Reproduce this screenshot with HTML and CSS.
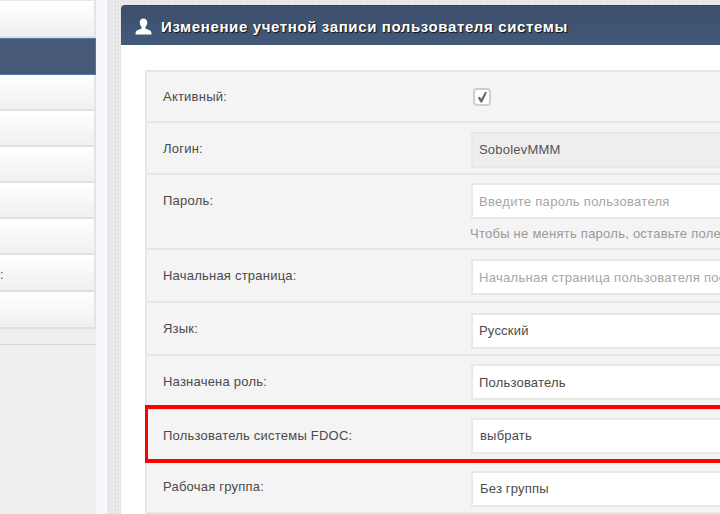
FILE: index.html
```html
<!DOCTYPE html>
<html lang="ru">
<head>
<meta charset="utf-8">
<title>Изменение учетной записи</title>
<link rel="stylesheet" href="styles.css">
</head>
<body>
<div class="page">
  <nav class="side">
    <ul class="menu">
      <li class="item"></li>
      <li class="item active"></li>
      <li class="item"></li>
      <li class="item"></li>
      <li class="item"></li>
      <li class="item"></li>
      <li class="item"></li>
      <li class="item">:</li>
      <li class="item"></li>
    </ul>
    <div class="side-gap"></div>
    <div class="side-rest"></div>
  </nav>
  <div class="rail"></div>
  <main class="main">
    <section class="panel">
      <header class="head">
        <svg class="user" viewBox="0 0 18 18" aria-hidden="true"><path d="M9 0.5c-2.6 0-4 1.9-4 4.3 0 1.9.9 3.7 1.9 4.6.3.3.3 1 .1 1.5-.3.7-2.8 1.2-4.6 2.2C1 13.8.6 15.2.5 17.500h17c-.1-2.300-.5-3.700-1.900-4.400-1.800-1-4.300-1.500-4.600-2.200-.2-.5-.2-1.200.1-1.500 1-.9 1.900-2.700 1.900-4.600C13 2.400 11.600.5 9 .5z"/></svg>
        <h1 class="title">Изменение учетной записи пользователя системы</h1>
      </header>
      <form class="form">
        <div class="row row-check">
          <label class="label label-check">Активный:</label>
          <span class="check"><svg viewBox="0 0 13 13" aria-hidden="true"><path d="M2 7.300 4.200 6.300 5.500 8.800 10 .8 11.800 1.500 6.600 12.500H5z"/></svg></span>
        </div>
        <div class="row r-login">
          <label class="label">Логин:</label>
          <div class="field"><input class="input readonly" value="SobolevMMM" readonly></div>
        </div>
        <div class="row r-pass">
          <label class="label">Пароль:</label>
          <div class="field">
            <input class="input" placeholder="Введите пароль пользователя">
            <p class="hint">Чтобы не менять пароль, оставьте поле</p>
          </div>
        </div>
        <div class="row r-start">
          <label class="label">Начальная страница:</label>
          <div class="field"><input class="input" placeholder="Начальная страница пользователя после входа"></div>
        </div>
        <div class="row r-lang">
          <label class="label">Язык:</label>
          <div class="field"><div class="input select">Русский</div></div>
        </div>
        <div class="row r-role">
          <label class="label">Назначена роль:</label>
          <div class="field"><div class="input select">Пользователь</div></div>
        </div>
        <div class="row r-fdoc">
          <label class="label">Пользователь системы FDOC:</label>
          <div class="field"><div class="input select shifted">выбрать</div></div>
        </div>
        <div class="row r-group">
          <label class="label">Рабочая группа:</label>
          <div class="field"><div class="input select shifted">Без группы</div></div>
        </div>
      </form>
    </section>
  </main>
</div>
</body>
</html>
```
FILE: styles.css
```css
* { box-sizing: border-box; }
html, body { margin: 0; padding: 0; }
body {
  width: 720px;
  height: 514px;
  overflow: hidden;
  font-family: "Liberation Sans", Arial, sans-serif;
  font-size: 13px;
  color: #4a4a4a;
}
.page { display: flex; width: 720px; height: 514px; overflow: hidden; }

.side { flex: none; width: 96px; display: flex; flex-direction: column; }
.menu { list-style: none; margin: 0; padding: 0; }
.item {
  height: 36px;
  border-right: 2px solid #e4e4e4;
  border-bottom: 2px solid #e0e0e0;
  background: linear-gradient(#ffffff, #f0f0f0);
  font-size: 13px;
  line-height: 40px;
  color: #4a4a4a;
}
.item:first-child { height: 38px; border-top: 1px solid #e6e6e6; }
.item:nth-child(n+8) { height: 37px; }
.item.active {
  height: 37px;
  background: #465a78;
  border: 1px solid #5377a3;
  border-left: 0;
}
.side-gap, .side-rest {
  background-color: #efefef;
  background-image: repeating-conic-gradient(#ebebeb 0 25%, #f2f2f2 0 50%);
  background-size: 4px 4px;
}
.side-gap { height: 16px; border-bottom: 1px solid #d6d6d6; flex: none; }
.side-rest { flex: 1; }

.rail { flex: none; width: 11px; background: #f5f7fa; }

.main {
  flex: none;
  width: 800px;
  padding: 5px 0 0 14px;
  background-color: #e6e6e6;
  background-image:
    repeating-linear-gradient(90deg, rgba(255,255,255,.35) 0 1px, transparent 1px 3px),
    repeating-linear-gradient(0deg, rgba(0,0,0,.03) 0 1px, transparent 1px 4px);
}
.panel { background: #fff; border-radius: 4px 0 0 0; height: 520px; overflow: hidden; }
.head {
  height: 40px;
  display: flex;
  align-items: center;
  gap: 9px;
  padding-left: 14px;
  padding-top: 1px;
  background: linear-gradient(#3c4f6c, #44597a);
  border-top: 1px solid #33445e;
}
.user { width: 17px; height: 17px; fill: #fff; flex: none; }
.title {
  margin: 0;
  font-size: 15px;
  font-weight: bold;
  letter-spacing: 0.62px;
  color: #fff;
  text-shadow: 1px 1px 1px #111;
  white-space: nowrap;
}

.form {
  margin: 25px 0 0 24px;
  width: 760px;
  background: #f4f4f4;
  border-top: 2px solid #e6e6e6;
  border-left: 2px solid #e6e6e6;
}
.row {
  display: flex;
  align-items: flex-start;
  padding: 8px 0 7px 16px;
  border-bottom: 2px solid #e6e6e6;
  position: relative;
}
.row-check { padding-top: 16px; padding-bottom: 15px; }
.r-login { padding-top: 9px; padding-bottom: 5px; }
.r-login .label { margin-top: 8px; }
.r-pass { padding-top: 8px; padding-bottom: 0; height: 75px; }
.r-start { padding-top: 9px; padding-bottom: 6px; }
.r-start .label { margin-top: 8px; }
.r-lang { padding-top: 10px; padding-bottom: 5px; }
.r-lang .label { margin-top: 7px; }
.r-role { padding-bottom: 8px; }
.r-role .input { line-height: 34px; }
.r-group { padding-bottom: 5px; }
.r-group .label { margin-top: 7px; }
.r-fdoc::after {
  content: "";
  position: absolute;
  left: -2px;
  right: -40px;
  top: -5px;
  bottom: -2px;
  border: solid #f00;
  border-width: 4px 3px;
  pointer-events: none;
}
.label {
  flex: none;
  width: 308px;
  margin-top: 9px;
  line-height: 17px;
  letter-spacing: 0.22px;
  color: #4a4a4a;
  white-space: nowrap;
}
.label-check { margin-top: 0; }
.field { flex: none; width: 420px; }
.input {
  display: block;
  width: 100%;
  height: 36px;
  border: 2px solid #e8e8e8;
  background: #fff;
  padding: 0 6px;
  font: 13px/32px "Liberation Sans", Arial, sans-serif;
  letter-spacing: 0.2px;
  color: #4a4a4a;
  outline: none;
  border-radius: 0;
}
.input::placeholder { color: #a6a6a6; opacity: 1; letter-spacing: 0.3px; }
.readonly { background: #eeeeee; color: #555; padding-bottom: 2px; }
.shifted { padding-left: 7px; }
.hint {
  margin: 6px 0 0 -1px;
  line-height: 18px;
  letter-spacing: 0.25px;
  color: #999;
  white-space: nowrap;
}
.check {
  flex: none;
  width: 18px;
  height: 18px;
  margin-left: 2px;
  border: 2px solid #cfcfcf;
  border-radius: 4px;
  background: #fff;
  display: flex;
  align-items: center;
  justify-content: center;
}
.check svg { width: 12px; height: 12px; fill: #666; }
```
